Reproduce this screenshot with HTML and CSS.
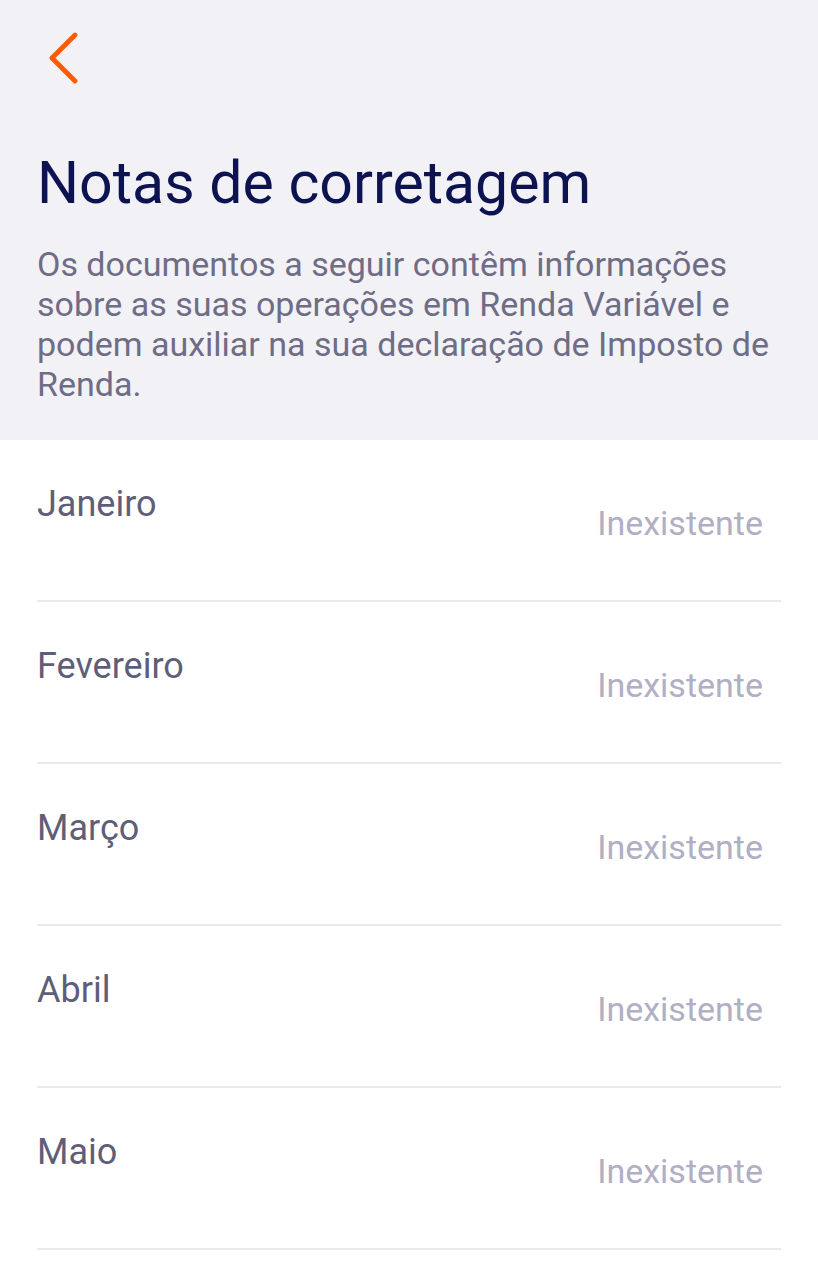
FILE: index.html
```html
<!DOCTYPE html>
<html lang="pt-BR">
<head>
<meta charset="utf-8">
<title>Notas de corretagem</title>
<link rel="stylesheet" href="styles.css">
</head>
<body>
<header class="header">
  <button class="back" aria-label="Voltar">
    <svg width="40" height="60" viewBox="0 0 40 60"><path d="M26 3 L3 26 L26 49" fill="none" stroke="#ff5a00" stroke-width="4.8" stroke-linecap="round" stroke-linejoin="round"/></svg>
  </button>
  <h1 class="title">Notas de corretagem</h1>
  <p class="desc">Os documentos a seguir contêm informações sobre as suas operações em Renda Variável e podem auxiliar na sua declaração de Imposto de Renda.</p>
</header>
<ul class="list">
  <li class="row"><span class="month">Janeiro</span><span class="status">Inexistente</span></li>
  <li class="row"><span class="month">Fevereiro</span><span class="status">Inexistente</span></li>
  <li class="row"><span class="month">Março</span><span class="status">Inexistente</span></li>
  <li class="row"><span class="month">Abril</span><span class="status">Inexistente</span></li>
  <li class="row"><span class="month">Maio</span><span class="status">Inexistente</span></li>
</ul>
</body>
</html>
```
FILE: styles.css
```css
* { box-sizing: border-box; }
html, body { margin: 0; padding: 0; background: #ffffff; }
body { font-family: Roboto, "Noto Sans", sans-serif; width: 818px; }
.header {
  background: #f2f2f6;
  padding: 32px 37px 0 37px;
  height: 440px;
}
.back {
  display: block;
  background: none;
  border: 0;
  padding: 0;
  margin: 0 0 0 12px;
  width: 40px;
  height: 60px;
  cursor: pointer;
}
.back svg { display: block; }
.title {
  margin: 56px 0 0 0;
  font-size: 59px;
  font-weight: 400;
  line-height: 70px;
  color: #0d1250;
}
.desc {
  margin: 26px 0 0 0;
  font-size: 34px;
  line-height: 40px;
  color: #6e6d85;
}
.list {
  list-style: none;
  margin: 0;
  padding: 0 37px;
}
.row {
  display: flex;
  justify-content: space-between;
  align-items: flex-start;
  height: 162px;
  padding: 44px 18px 0 0;
  border-bottom: 2px solid #e9e9ee;
}
.month {
  font-size: 36px;
  line-height: 40px;
  color: #5f5e78;
}
.status {
  margin-top: 19px;
  font-size: 34px;
  line-height: 40px;
  color: #b0afc3;
}
```
